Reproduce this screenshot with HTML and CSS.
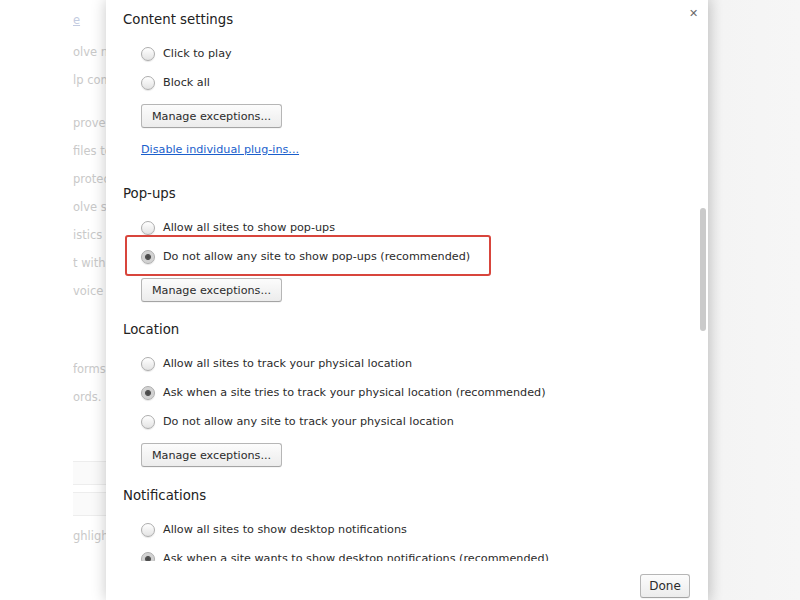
FILE: index.html
```html
<!DOCTYPE html>
<html lang="en">
<head>
<meta charset="utf-8">
<title>Content settings</title>
<link rel="stylesheet" href="styles.css">
</head>
<body>
<div class="screen">
  <div class="bgpage">
    <div class="bgline link">e</div>
    <div class="bgline gap1">olve navigation errors</div>
    <div class="bgline">lp complete searches</div>
    <div class="bgline gap2">prove Chrome</div>
    <div class="bgline">files to Google</div>
    <div class="bgline">protect you</div>
    <div class="bgline">olve spelling errors</div>
    <div class="bgline">istics and crash</div>
    <div class="bgline">t with requests</div>
    <div class="bgline">voice search</div>
    <div class="bgline gap3">forms with a single</div>
    <div class="bgline">ords.</div>
    <div class="bgbox first"></div>
    <div class="bgbox"></div>
    <div class="bgline gap4">ghlight</div>
  </div>

  <div class="dialog">
    <span class="close">&#x2715;</span>
    <div class="scroll">
      <div class="content">
        <section class="sec">
          <h3 class="sec-title">Content settings</h3>
          <div class="opt"><span class="radio"></span>Click to play</div>
          <div class="opt"><span class="radio"></span>Block all</div>
          <button class="btn">Manage exceptions...</button>
          <a class="link-plug" href="#">Disable individual plug-ins...</a>
        </section>

        <section class="sec">
          <h3 class="sec-title">Pop-ups</h3>
          <div class="opt"><span class="radio"></span>Allow all sites to show pop-ups</div>
          <div class="opt highlight"><span class="radio on"></span>Do not allow any site to show pop-ups (recommended)</div>
          <button class="btn">Manage exceptions...</button>
        </section>

        <section class="sec">
          <h3 class="sec-title">Location</h3>
          <div class="opt"><span class="radio"></span>Allow all sites to track your physical location</div>
          <div class="opt"><span class="radio on"></span>Ask when a site tries to track your physical location (recommended)</div>
          <div class="opt"><span class="radio"></span>Do not allow any site to track your physical location</div>
          <button class="btn">Manage exceptions...</button>
        </section>

        <section class="sec">
          <h3 class="sec-title">Notifications</h3>
          <div class="opt"><span class="radio"></span>Allow all sites to show desktop notifications</div>
          <div class="opt"><span class="radio on"></span>Ask when a site wants to show desktop notifications (recommended)</div>
          <div class="opt"><span class="radio"></span>Do not allow any site to show desktop notifications</div>
        </section>
      </div>
      <div class="track"><div class="thumb"></div></div>
    </div>
    <div class="footer">
      <button class="btn done">Done</button>
    </div>
  </div>

  <div class="right"></div>
</div>
</body>
</html>
```

FILE: styles.css
```css
* { box-sizing: border-box; }
html, body { margin: 0; padding: 0; }
body {
  width: 800px;
  height: 600px;
  overflow: hidden;
  background: #fff;
  font-family: "DejaVu Sans", "Liberation Sans", sans-serif;
}
.screen {
  display: flex;
  height: 600px;
}

/* background page */
.bgpage {
  width: 106px;
  flex: none;
  padding-left: 73px;
  overflow: hidden;
  background: #fff;
  color: #c9c9c9;
  font-size: 11.5px;
  padding-top: 6px;
}
.bgline {
  height: 28px;
  line-height: 28px;
  white-space: nowrap;
  overflow: hidden;
}
.bgline.link { text-decoration: underline; color: #c3cbe0; }
.bgline.gap1 { margin-top: 4px; }
.bgline.gap2 { margin-top: 15px; }
.bgline.gap3 { margin-top: 50px; }
.bgline.gap4 { margin-top: 6px; }
.bgbox {
  height: 24px;
  margin-top: 7px;
  border-top: 1px solid #ededed;
  border-bottom: 1px solid #ededed;
  background: #fafafa;
}
.bgbox.first { margin-top: 50px; }

/* dialog */
.dialog {
  width: 602px;
  flex: none;
  height: 600px;
  background: #fff;
  position: relative;
  z-index: 1;
  display: flex;
  flex-direction: column;
  box-shadow: 0 0 14px rgba(0, 0, 0, 0.22);
}
.close {
  position: absolute;
  top: 6px;
  left: 583px;
  font-size: 11px;
  font-weight: bold;
  color: #6a6a6a;
  line-height: 16px;
}
.scroll {
  height: 561px;
  flex: none;
  overflow: hidden;
  display: flex;
}
.content {
  flex: 1;
  padding: 10px 0 0 17px;
  color: #2b2b2b;
}
.track {
  width: 6px;
  margin-right: 2px;
  flex: none;
}
.thumb {
  margin-top: 208px;
  height: 123px;
  border-radius: 3px;
  background: #cacaca;
}

.sec-title {
  margin: 0;
  height: 20px;
  line-height: 20px;
  font-size: 13.3px;
  font-weight: normal;
  color: #222;
}
.sec + .sec .sec-title { margin-top: 18px; }
.sec:nth-child(2) .sec-title { margin-top: 24px; }
.sec:nth-child(4) .sec-title { margin-top: 19px; }
.sec-title + .opt { margin-top: 9px; }

.opt {
  display: flex;
  align-items: center;
  height: 29px;
  margin-left: 18px;
  font-size: 11.2px;
  color: #2b2b2b;
  white-space: nowrap;
  position: relative;
}
.radio {
  width: 14px;
  height: 14px;
  flex: none;
  margin-right: 8px;
  border-radius: 50%;
  border: 1px solid #adadad;
  background: linear-gradient(#ffffff, #e3e3e3);
  box-shadow: 0 1px 1px rgba(0, 0, 0, 0.1);
}
.radio.on {
  background: radial-gradient(circle, #444 0, #555 2.6px, #cfcfcf 3.4px, #dcdcdc 100%);
}
.highlight::after {
  content: "";
  position: absolute;
  left: -16px;
  top: -7px;
  width: 362px;
  height: 37px;
  border: 2px solid #d8453c;
  border-radius: 3px;
}

.btn {
  display: block;
  height: 24px;
  margin: 7px 0 0 18px;
  padding: 0;
  font-family: inherit;
  font-size: 11.2px;
  color: #2b2b2b;
  white-space: nowrap;
  text-align: center;
  border: 1px solid #b6b6b6;
  border-bottom-color: #a4a4a4;
  border-radius: 3px;
  background: linear-gradient(#fcfcfc, #ececec);
  box-shadow: 0 1px 0 rgba(0, 0, 0, 0.04);
}
.sec .btn { width: 141px; }
.link-plug {
  display: block;
  margin: 12px 0 0 18px;
  height: 20px;
  line-height: 20px;
  font-size: 11.2px;
  color: #1b5fcc;
  text-decoration: underline;
  width: max-content;
}

.footer {
  flex: 1;
  display: flex;
  justify-content: flex-end;
  padding: 13px 18px 0 0;
}
.btn.done {
  margin: 0;
  width: 50px;
  font-size: 12px;
}

.right {
  flex: 1;
  background: linear-gradient(to right, #ececec, #f4f4f4 14px, #f6f6f6);
}
```
